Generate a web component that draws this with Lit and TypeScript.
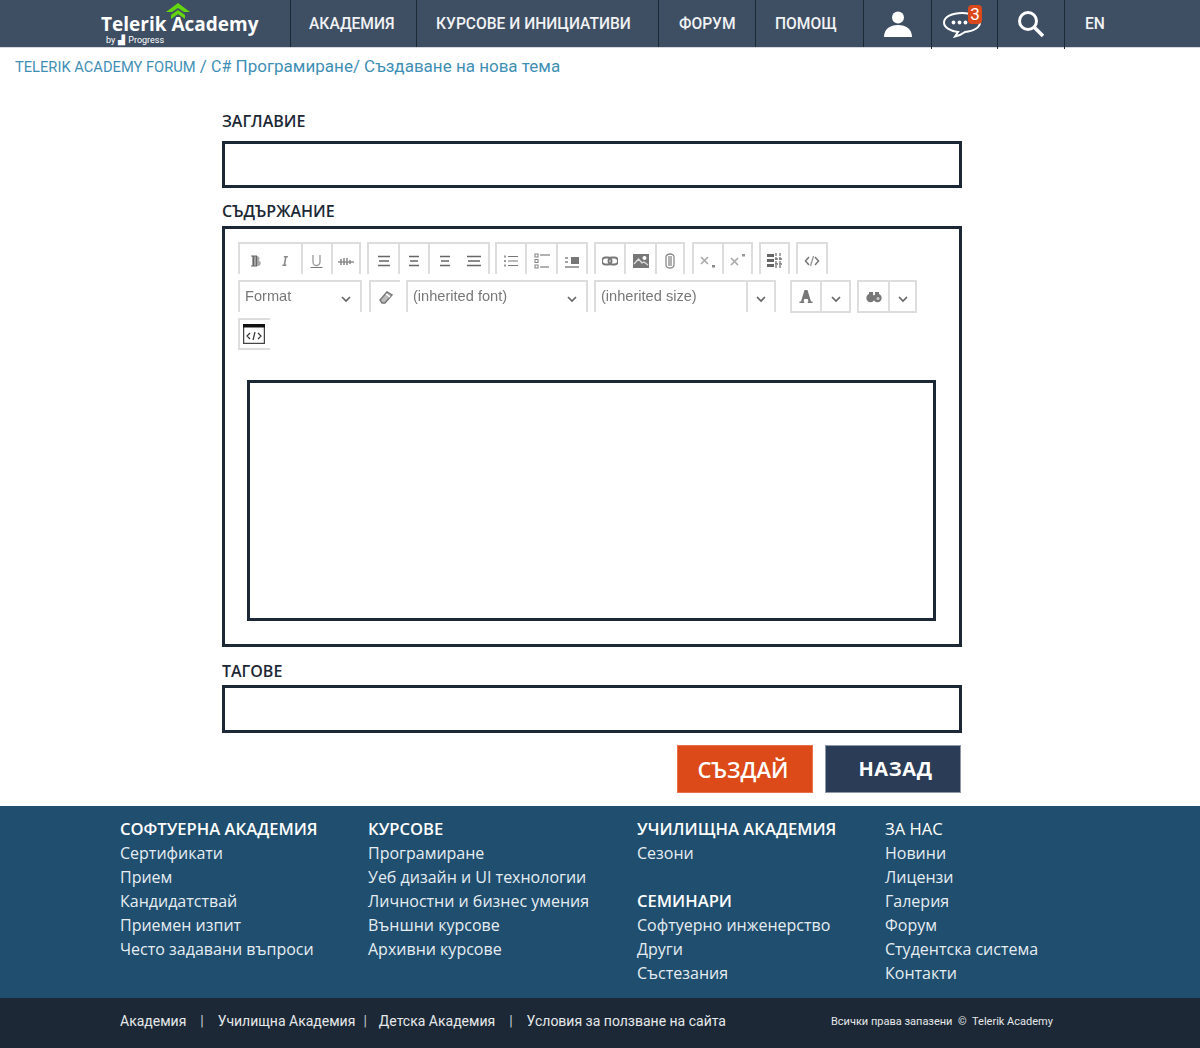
import { LitElement, html, css, svg } from 'lit';
import { customElement } from 'lit/decorators.js';

const glyphs: Record<string, any> = {
  bold: svg`<path d="M4 3h5a2.500 2.500 0 0 1 1.500 4.500A2.700 2.700 0 0 1 9.500 13H4z" fill="#aaa"/><path d="M5.500 3v10M8.500 3v10M3 3h6M3 13h6" stroke="#666" stroke-width="1.200"/>`,
  italic: svg`<path d="M7 3h4l-.3 1.500H9.500L8.300 11.500h1.200L9.200 13H5.300l.3-1.500h1.100L7.900 4.500H6.700z" fill="#888"/>`,
  underline: svg`<path d="M4 2v7a3.500 3.500 0 0 0 7 0V2" fill="none" stroke="#999" stroke-width="1.300"/><path d="M1.500 14.500h12" stroke="#777" stroke-width="1"/>`,
  strike: svg`<path d="M0 9h16" stroke="#777" stroke-width="1.200"/><path d="M3 6v6M6 5v7M9 5v7M12 7v4" stroke="#888" stroke-width="1.500"/>`,
  left: svg`<path d="M2 3.500h12M3 8h10M2 12.500h12" stroke="#666" stroke-width="1.400"/>`,
  center: svg`<path d="M3 3.500h10M4 8h8M3 12.500h10" stroke="#666" stroke-width="1.400"/>`,
  right: svg`<path d="M3 3.500h10M4 8h8M3 12.500h10" stroke="#666" stroke-width="1.400"/>`,
  justify: svg`<path d="M1 3.500h14M2 8h12M1 12.500h14" stroke="#666" stroke-width="1.400"/>`,
  ul: svg`<path d="M5 3.500h10M5 8h10M5 12.500h10" stroke="#777" stroke-width="1.100"/><path d="M1 3.500h2M1 8h2M1 12.500h2" stroke="#999" stroke-width="1.800"/>`,
  ol: svg`<path d="M6 2h10M6 14h9" stroke="#666" stroke-width="1.100"/><path d="M1 1h3v3H1zM1 6.500h3v3H1zM1 12h3v3H1z" fill="none" stroke="#888" stroke-width="1.100"/>`,
  indent: svg`<path d="M1 14h14" stroke="#777" stroke-width="1.400"/><path d="M7 4h8v7H7z" fill="#777"/><path d="M1 5h3M1 9h3" stroke="#888" stroke-width="1.500"/>`,
  link: svg`<rect x="0" y="4.500" width="9.500" height="7" rx="3.500" fill="none" stroke="#777" stroke-width="2"/><rect x="6.500" y="4.500" width="9.500" height="7" rx="3.500" fill="none" stroke="#777" stroke-width="2"/>`,
  image: svg`<path d="M0 1h16v14H0z" fill="#777"/><circle cx="11.500" cy="5" r="2" fill="#fff"/><path d="M1 11l4.500-5 3.500 4 2-1 4 3" fill="none" stroke="#ddd" stroke-width="1.300"/>`,
  clip: svg`<path d="M4 4a4 3 0 0 1 8 0v8a4 3 0 0 1-8 0zM7 3v10M9 3v10" fill="none" stroke="#888" stroke-width="1.300"/>`,
  sub: svg`<path d="M1 4l7 7M8 4l-7 7" stroke="#aaa" stroke-width="1.700"/><path d="M12 12h3v2.500h-3z" fill="#888"/>`,
  sup: svg`<path d="M1 5l7 7M8 5l-7 7" stroke="#aaa" stroke-width="1.700"/><path d="M12 1h3v2.500h-3z" fill="#999"/>`,
  table: svg`<path d="M0 1h7v3H0zM0 6h7v3H0zM0 11h7v3H0z" fill="#666"/><path d="M9 0v15M13 0v15M8 6h8M8 11h8" stroke="#777" stroke-width="1.300" stroke-dasharray="3 1"/>`,
  code: svg`<path d="M5 4L1.500 8 5 12M11 4l3.500 4L11 12" fill="none" stroke="#777" stroke-width="1.500"/><path d="M9.500 3L6.500 13" stroke="#999" stroke-width="1.300"/>`,
  clear: svg`<path d="M2 11l7-8 5 3-7 8H4z" fill="#bbb" stroke="#777" stroke-width="1.400"/><path d="M8 5l4 3" stroke="#fff" stroke-width="1.500"/>`,
  color: svg`<path d="M6.500 1h3L13 12.500h1.500V14H9.800v-1.500h.7l-.7-2.500H6.200l-.7 2.500h.7V14H1.500v-1.500H3z" fill="#777"/>`,
  find: svg`<circle cx="4.500" cy="9" r="4.200" fill="#777"/><circle cx="11.500" cy="9" r="4.200" fill="#777"/><path d="M3 3h4v5H3zM9 3h4v5H9z" fill="#777"/><circle cx="12" cy="9.500" r="1.500" fill="#ccc"/>`,
  source: svg`<path d="M.5.500h21v19H.5z" fill="#fff" stroke="#444" stroke-width="1.500"/><path d="M0 0h22v3.500H0z" fill="#111"/><path d="M7 9l-3 3 3 3M15 9l3 3-3 3M12 8l-2 8" fill="none" stroke="#333" stroke-width="1.200"/>`,
};

const chevron = html`<svg class="chev" width="10" height="7" viewBox="0 0 10 7"><path d="M1 1l4 4 4-4" fill="none" stroke="#666" stroke-width="1.700"/></svg>`;

// w = total width including borders, gap = space before the group
const row1 = [
  { gap: 0, btns: [{ w: 63, icons: ['bold', 'italic'] }, { w: 30, icons: ['underline'] }, { w: 30, icons: ['strike'] }] },
  { gap: 6, btns: [{ w: 31, icons: ['left'] }, { w: 30, icons: ['center'] }, { w: 62, icons: ['right', 'justify'] }] },
  { gap: 5, btns: [{ w: 30, icons: ['ul'] }, { w: 31, icons: ['ol'] }, { w: 32, icons: ['indent'] }] },
  { gap: 6, btns: [{ w: 30, icons: ['link'] }, { w: 31, icons: ['image'] }, { w: 30, icons: ['clip'] }] },
  { gap: 7, btns: [{ w: 30, icons: ['sub'] }, { w: 31, icons: ['sup'] }] },
  { gap: 6, btns: [{ w: 31, icons: ['table'] }] },
  { gap: 6, btns: [{ w: 32, icons: ['code'] }] },
];

const footerCols = [
  ['СОФТУЕРНА АКАДЕМИЯ', 'Сертификати', 'Прием', 'Кандидатствай', 'Приемен изпит', 'Често задавани въпроси'],
  ['КУРСОВЕ', 'Програмиране', 'Уеб дизайн и UI технологии', 'Личностни и бизнес умения', 'Външни курсове', 'Архивни курсове'],
];

@customElement('app-root')
export class AppRoot extends LitElement {
  static styles = css`
    :host {
      display: block;
      font-family: 'Roboto', sans-serif;
      background: #fff;
    }
    header {
      display: flex;
      height: 47px;
      background: #3e4f63;
      box-shadow: 0 1px 0 #d5d8dd;
      color: #fff;
    }
    .logo {
      box-sizing: border-box;
      width: 290px;
      padding: 14px 0 0 101px;
      position: relative;
    }
    .logo .name {
      font: 700 19px/20px 'Open Sans', sans-serif;
      white-space: nowrap;
      display: block;
    }
    .logo .by {
      font: 400 9px/10px 'Roboto', sans-serif;
      display: block;
      margin: 1px 0 0 5px;
      white-space: nowrap;
    }
    .logo .by i { font-style: normal; margin: 0 3px; }
    .logo svg {
      position: absolute;
      left: 165px;
      top: 3px;
    }
    .nav {
      box-sizing: border-box;
      border-left: 1px solid #1c2836;
      font-size: 15.6px;
      font-weight: 500;
      line-height: 48px;
      color: #f1f2f4;
      white-space: nowrap;
      height: 47px;
    }
    .w126 { width: 126px; padding-left: 18px; }
    .w242 { width: 242px; padding-left: 19px; }
    .w97 { width: 97px; padding-left: 20px; }
    .w108 { width: 108px; padding-left: 19px; }
    .w68 { width: 68px; }
    .w66 { width: 66px; }
    .w67 { width: 67px; }
    .w60 { width: 60px; padding-left: 20px; }
    .nav.icon {
      display: flex;
      align-items: center;
      justify-content: center;
      position: relative;
    }
    .nav.tall { height: 49px; }
    .nav.search svg { margin-bottom: 2px; }
    .nav.chat svg { margin-right: 6px; margin-top: 1px; }
    .badge {
      position: absolute;
      left: 36px;
      top: 5px;
      width: 14px;
      height: 19px;
      border-radius: 4px;
      background: #d9491c;
      color: #fff;
      font: 400 17px/19px 'Roboto', sans-serif;
      text-align: center;
    }
    .crumbs {
      box-sizing: border-box;
      padding: 9px 15px 0;
      font-size: 17px;
      font-weight: 400;
      line-height: 21px;
      color: #3f8fb5;
      height: 30px;
      white-space: nowrap;
    }
    .crumbs .up { font-size: 14.7px; }
    .crumbs .c { font-size: 16px; }
    form {
      box-sizing: border-box;
      width: 740px;
      margin-left: 222px;
      padding-top: 33px;
      height: 729px;
    }
    label {
      display: block;
      font: 600 16px/22px 'Open Sans', sans-serif;
      color: #1c2836;
    }
    .field {
      box-sizing: border-box;
      height: 47px;
      border: 3px solid #1c2836;
    }
    .l1 { margin-top: 9px; }
    .l2 { margin-top: 12px; }
    .l3 { margin-top: 13px; }
    .l4 { margin-top: 3px; height: 48px; }
    .editor {
      box-sizing: border-box;
      height: 421px;
      border: 3px solid #1c2836;
      margin-top: 4px;
      padding: 13px 23px 0 13px;
    }
    .row { display: flex; height: 32px; margin-bottom: 6px; }
    .group { display: flex; }
    .btn {
      box-sizing: border-box;
      height: 32px;
      display: flex;
      align-items: center;
      justify-content: center;
      gap: 13px;
      border-top: 2px solid #ddd;
      border-left: 2px solid #ddd;
      padding-top: 4px;
    }
    .btn.end { border-right: 2px solid #ddd; }
    .btn.clear { padding-top: 0; }
    .btn svg { flex: none; filter: blur(0.3px); }
    .sel {
      box-sizing: border-box;
      height: 32px;
      display: flex;
      align-items: center;
      justify-content: space-between;
      border-top: 2px solid #ddd;
      border-left: 2px solid #ddd;
      font: 400 14.6px/18px 'Liberation Sans', sans-serif;
      color: #777;
      padding: 0 9px 2px 5px;
    }
    .sel span { filter: blur(0.3px); }
    .sel .chev { margin-top: 6px; }
    .sel.end { border-right: 2px solid #ddd; }
    .btn.boxed { border-bottom: 2px solid #ddd; height: 33px; padding-top: 1px; }
    .btn.boxed .chev { margin-top: 4px; }
    .sel.arrow { padding: 0 8px 2px; }
    .btn.src {
      border-bottom: 2px solid #ddd;
      height: 32px;
      width: 32px;
      padding: 0 0 0 3px;
      justify-content: flex-start;
    }
    .area {
      box-sizing: border-box;
      width: 689px;
      height: 241px;
      border: 3px solid #1c2836;
      margin: 30px 0 0 9px;
    }
    .actions {
      display: flex;
      justify-content: flex-end;
      gap: 12px;
      margin-top: 12px;
    }
    .actions button {
      box-sizing: border-box;
      width: 136px;
      height: 48px;
      padding: 0 0 0 5px;
      border: 1px solid #8d98a8;
      background: #2a3c56;
      color: #fff;
      font: 700 20px/26px 'Open Sans', sans-serif;
      letter-spacing: 0.6px;
      margin-right: 1px;
    }
    .actions button.primary {
      background: #db4a18;
      border-color: #e8704a;
      font-size: 22px;
      font-weight: 600;
      margin-right: 0;
      padding: 0 4px 0 0;
      letter-spacing: 0;
    }
    .links {
      display: flex;
      height: 192px;
      box-sizing: border-box;
      padding: 11px 0 0 120px;
      background: #1f4e6e;
      color: #e6edf2;
      font: 400 16px/24px 'Open Sans', sans-serif;
    }
    .links div { white-space: nowrap; }
    .c1 { width: 248px; }
    .c2 { width: 269px; }
    .c3 { width: 248px; }
    .links b { display: block; font-size: 16.6px; font-weight: 600; color: #fff; }
    .links b.light { font-weight: 400; }
    .links .blank { height: 24px; }
    .bottom {
      display: flex;
      height: 50px;
      box-sizing: border-box;
      background: #1c2836;
      color: #e6e8ea;
      padding-left: 120px;
      font: 400 14px/46px 'Roboto', sans-serif;
    }
    .bottom span { white-space: nowrap; }
    .sep { color: #c5c9ce; font-weight: 400; }
    .s1 { margin: 0 14px; }
    .s2 { margin: 0 12px 0 8px; }
    .rights { font-size: 11px; line-height: 47px; margin-left: 105px; }
  `;

  renderIcon(name: string) {
    return html`<svg width="16" height="16" viewBox="0 0 16 16">${glyphs[name]}</svg>`;
  }

  renderToolbar() {
    return html`
      <div class="row">
        ${row1.map(
          (g) => html`<div class="group" style="margin-left:${g.gap}px">
            ${g.btns.map(
              (b, i) => html`<div class="btn ${i == g.btns.length - 1 ? 'end' : ''}" style="width:${b.w}px">
                ${b.icons.map((n) => this.renderIcon(n))}
              </div>`
            )}
          </div>`
        )}
      </div>
      <div class="row">
        <div class="sel end" style="width:124px"><span>Format</span>${chevron}</div>
        <div class="btn clear" style="width:31px;margin-left:7px">${this.renderIcon('clear')}</div>
        <div class="sel end" style="width:182px;margin-left:6px"><span>(inherited font)</span>${chevron}</div>
        <div class="sel" style="width:152px;margin-left:6px"><span>(inherited size)</span></div>
        <div class="sel end arrow" style="width:30px">${chevron}</div>
        <div class="btn boxed" style="width:30px;margin-left:14px">${this.renderIcon('color')}</div>
        <div class="btn boxed end" style="width:31px">${chevron}</div>
        <div class="btn boxed" style="width:31px;margin-left:6px">${this.renderIcon('find')}</div>
        <div class="btn boxed end" style="width:29px">${chevron}</div>
      </div>
      <div class="row">
        <div class="btn src">
          <svg width="22" height="20" viewBox="0 0 22 20">${glyphs.source}</svg>
        </div>
      </div>
    `;
  }

  render() {
    return html`
      <header>
        <div class="logo">
          <svg width="28" height="20" viewBox="0 0 28 20">
            <path d="M13 0l12 9h-6l-6-4-6 4H1z" fill="#63d60f"/>
            <path d="M13 7l7 5v4l-7-5-7 5v-4z" fill="#63d60f"/>
          </svg>
          <span class="name">Telerik Academy</span>
          <span class="by">by<i>▟</i>Progress</span>
        </div>
        <div class="nav w126">АКАДЕМИЯ</div>
        <div class="nav w242">КУРСОВЕ И ИНИЦИАТИВИ</div>
        <div class="nav w97">ФОРУМ</div>
        <div class="nav w108">ПОМОЩ</div>
        <div class="nav icon w68">
          <svg width="28" height="28" viewBox="0 0 28 28">
            <circle cx="14" cy="7.500" r="6" fill="#fff"/>
            <path d="M0 27c0-8 6-12 14-12s14 4 14 12z" fill="#fff"/>
          </svg>
        </div>
        <div class="nav icon tall chat w66">
          <svg width="38" height="26" viewBox="0 0 38 26">
            <path d="M19 1C9 1 1 5 1 10.500c0 5 7 9 14 9.500l-3 4.500c5-1 8-3 10-4.500 9-.5 15-5 15-9.500C37 5 29 1 19 1z" fill="none" stroke="#fff" stroke-width="2"/>
            <circle cx="10.500" cy="10.500" r="1.900" fill="#fff"/><circle cx="16.500" cy="10.500" r="1.900" fill="#fff"/><circle cx="22.500" cy="10.500" r="1.900" fill="#fff"/>
          </svg>
          <span class="badge">3</span>
        </div>
        <div class="nav icon tall search w67">
          <svg width="28" height="28" viewBox="0 0 28 28">
            <circle cx="11" cy="11" r="8.500" fill="none" stroke="#fff" stroke-width="3"/>
            <path d="M17 17l9 9" stroke="#fff" stroke-width="3.500"/>
          </svg>
        </div>
        <div class="nav tall w60">EN</div>
      </header>
      <div class="crumbs">
        <span class="up">TELERIK ACADEMY FORUM</span> / <span class="c">C#</span> Програмиране/ Създаване на нова тема
      </div>
      <form>
        <label>ЗАГЛАВИЕ</label>
        <div class="field l1"></div>
        <label class="l2">СЪДЪРЖАНИЕ</label>
        <div class="editor">
          ${this.renderToolbar()}
          <div class="area"></div>
        </div>
        <label class="l3">ТАГОВЕ</label>
        <div class="field l4"></div>
        <div class="actions">
          <button class="primary" type="button">СЪЗДАЙ</button>
          <button type="button">НАЗАД</button>
        </div>
      </form>
      <footer>
        <div class="links">
          ${footerCols.map(
            (c, i) => html`<div class="c${i + 1}">
              <b>${c[0]}</b>
              ${c.slice(1).map((t) => html`<div>${t}</div>`)}
            </div>`
          )}
          <div class="c3">
            <b>УЧИЛИЩНА АКАДЕМИЯ</b>
            <div>Сезони</div>
            <div class="blank"></div>
            <b>СЕМИНАРИ</b>
            <div>Софтуерно инженерство</div>
            <div>Други</div>
            <div>Състезания</div>
          </div>
          <div>
            <b class="light">ЗА НАС</b>
            <div>Новини</div>
            <div>Лицензи</div>
            <div>Галерия</div>
            <div>Форум</div>
            <div>Студентска система</div>
            <div>Контакти</div>
          </div>
        </div>
        <div class="bottom">
          <span>Академия</span>
          <span class="sep s1">|</span>
          <span>Училищна Академия</span>
          <span class="sep s2">|</span>
          <span>Детска Академия</span>
          <span class="sep s1">|</span>
          <span>Условия за ползване на сайта</span>
          <span class="rights">Всички права запазени &nbsp;©&nbsp; Telerik Academy</span>
        </div>
      </footer>
    `;
  }
}
